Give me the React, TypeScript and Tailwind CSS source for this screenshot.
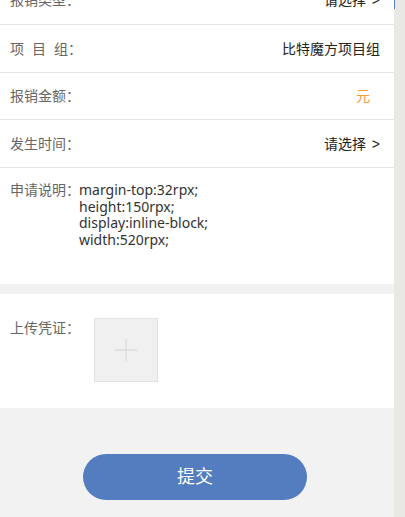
import React from "react";

const font = { fontFamily: '"Liberation Sans", "Noto Sans CJK SC", sans-serif' };
const latin = { fontFamily: '"Noto Sans", "Noto Sans CJK SC", sans-serif' };

function Row({ label, children, h }: { label: React.ReactNode; children?: React.ReactNode; h: string }) {
  return (
    <div className={`flex items-center justify-between border-b border-[#e5e5e5] pl-[10px] pr-[14px] ${h}`}>
      <div className="text-[14px] leading-[20px] text-[#666]">{label}</div>
      <div className="text-[14px] leading-[20px] text-[#222]">{children}</div>
    </div>
  );
}

export default function App() {
  return (
    <div className="flex h-[517px] w-[405px] overflow-hidden bg-[#f2f2f2]" style={font}>
      <div className="w-[394px] shrink-0">
        <div className="-mt-[24px] bg-white">
          <Row h="h-[49px]" label="报销类型：">
            请选择 <span className="ml-[2px]">&gt;</span>
          </Row>
          <Row
            h="h-[48px]"
            label={
              <span>
                <span className="mr-[8px]">项</span>
                <span className="mr-[8px]">目</span>
                <span>组：</span>
              </span>
            }
          >
            比特魔方项目组
          </Row>
          <Row h="h-[47px]" label="报销金额：">
            <span className="mr-[10px] text-[#f39b3d]">元</span>
          </Row>
          <Row h="h-[48px]" label="发生时间：">
            请选择 <span className="ml-[2px]">&gt;</span>
          </Row>
          <div className="flex h-[116px] pl-[10px] pt-[14px]">
            <div className="text-[14px] leading-[17px] text-[#666]">申请说明：</div>
            <div className="ml-[-1px] text-[14px] leading-[16.6px] text-[#333]" style={latin}>
              <div>margin-top:32rpx;</div>
              <div>height:150rpx;</div>
              <div>display:inline-block;</div>
              <div>width:520rpx;</div>
            </div>
          </div>
        </div>
        <div className="mt-[10px] flex h-[114px] bg-white pl-[10px] pt-[24px]">
          <div className="pt-[2px] text-[14px] leading-[17px] text-[#666]">上传凭证：</div>
          <div className="ml-[14px] flex h-[64px] w-[64px] items-center justify-center border border-[#e3e3e3] bg-[#f0f0f0]">
            <svg width="22" height="22" viewBox="0 0 22 22">
              <path d="M11 0 V22 M0 11 H22" stroke="#dcdcdc" strokeWidth="1.3" fill="none" />
            </svg>
          </div>
        </div>
        <div className="flex justify-center pt-[46px]">
          <button className="ml-[-4px] h-[46px] w-[224px] rounded-full bg-[#537dbf] text-[18px] text-white">
            提交
          </button>
        </div>
      </div>
      <div className="relative w-[11px] shrink-0 bg-[#e9e8e4]">
        <div className="absolute left-0 top-0 h-[9px] w-[1px] bg-[#5b7fc4]" />
      </div>
    </div>
  );
}
